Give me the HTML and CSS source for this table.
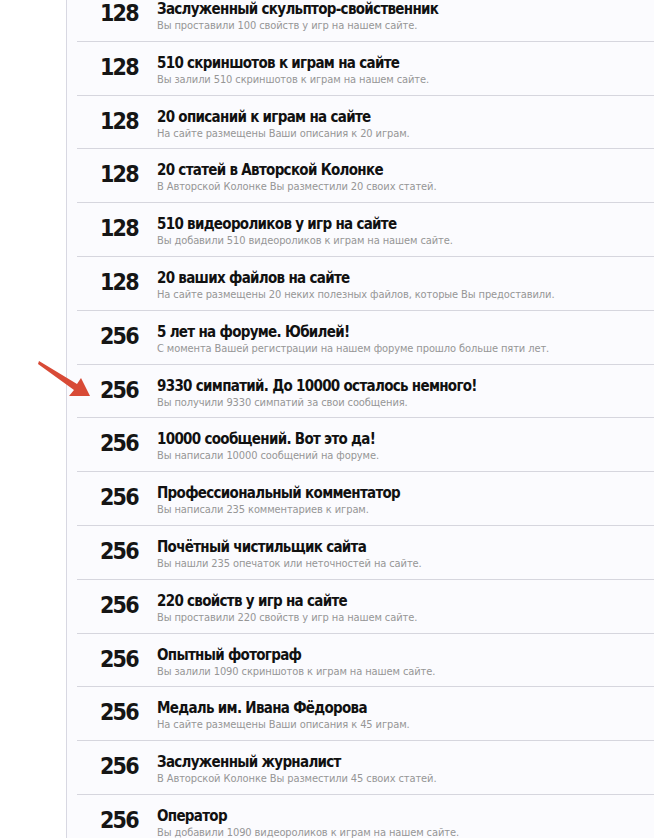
FILE: index.html
```html
<!DOCTYPE html>
<html lang="ru">
<head>
<meta charset="utf-8">
<title>Награды</title>
<link rel="stylesheet" href="styles.css">
</head>
<body>
<div class="page">
  <div class="gutter"></div>
  <div class="content">
    <ul class="list">
      <li class="row"><span class="pts">128</span><div class="info"><div class="title">Заслуженный скульптор-свойственник</div><div class="desc">Вы проставили 100 свойств у игр на нашем сайте.</div></div></li>
      <li class="row"><span class="pts">128</span><div class="info"><div class="title">510 скриншотов к играм на сайте</div><div class="desc">Вы залили 510 скриншотов к играм на нашем сайте.</div></div></li>
      <li class="row"><span class="pts">128</span><div class="info"><div class="title">20 описаний к играм на сайте</div><div class="desc">На сайте размещены Ваши описания к 20 играм.</div></div></li>
      <li class="row"><span class="pts">128</span><div class="info"><div class="title">20 статей в Авторской Колонке</div><div class="desc">В Авторской Колонке Вы разместили 20 своих статей.</div></div></li>
      <li class="row"><span class="pts">128</span><div class="info"><div class="title">510 видеороликов у игр на сайте</div><div class="desc">Вы добавили 510 видеороликов к играм на нашем сайте.</div></div></li>
      <li class="row"><span class="pts">128</span><div class="info"><div class="title">20 ваших файлов на сайте</div><div class="desc">На сайте размещены 20 неких полезных файлов, которые Вы предоставили.</div></div></li>
      <li class="row"><span class="pts">256</span><div class="info"><div class="title">5 лет на форуме. Юбилей!</div><div class="desc">С момента Вашей регистрации на нашем форуме прошло больше пяти лет.</div></div></li>
      <li class="row marked"><span class="pts">256</span><div class="info"><div class="title">9330 симпатий. До 10000 осталось немного!</div><div class="desc">Вы получили 9330 симпатий за свои сообщения.</div></div>
        <svg class="arrow" width="60" height="45" viewBox="0 0 60 45"><path d="M0 0 L38 23 L42 17 L51 35 L30 35 L35 29 L-1 3 Z" fill="#d84a36"/></svg>
      </li>
      <li class="row"><span class="pts">256</span><div class="info"><div class="title">10000 сообщений. Вот это да!</div><div class="desc">Вы написали 10000 сообщений на форуме.</div></div></li>
      <li class="row"><span class="pts">256</span><div class="info"><div class="title">Профессиональный комментатор</div><div class="desc">Вы написали 235 комментариев к играм.</div></div></li>
      <li class="row"><span class="pts">256</span><div class="info"><div class="title">Почётный чистильщик сайта</div><div class="desc">Вы нашли 235 опечаток или неточностей на сайте.</div></div></li>
      <li class="row"><span class="pts">256</span><div class="info"><div class="title">220 свойств у игр на сайте</div><div class="desc">Вы проставили 220 свойств у игр на нашем сайте.</div></div></li>
      <li class="row"><span class="pts">256</span><div class="info"><div class="title">Опытный фотограф</div><div class="desc">Вы залили 1090 скриншотов к играм на нашем сайте.</div></div></li>
      <li class="row"><span class="pts">256</span><div class="info"><div class="title">Медаль им. Ивана Фёдорова</div><div class="desc">На сайте размещены Ваши описания к 45 играм.</div></div></li>
      <li class="row"><span class="pts">256</span><div class="info"><div class="title">Заслуженный журналист</div><div class="desc">В Авторской Колонке Вы разместили 45 своих статей.</div></div></li>
      <li class="row"><span class="pts">256</span><div class="info"><div class="title">Оператор</div><div class="desc">Вы добавили 1090 видеороликов к играм на нашем сайте.</div></div></li>
    </ul>
  </div>
</div>
</body>
</html>
```
FILE: styles.css
```css
html, body {
  margin: 0;
  padding: 0;
  background: #ffffff;
  overflow: hidden;
}
body {
  font-family: "DejaVu Sans Condensed", "DejaVu Sans", sans-serif;
  color: #111;
}
.page {
  display: flex;
  margin-top: -12px;
  min-height: 900px;
}
.gutter {
  width: 66px;
  flex: none;
}
.content {
  flex: 1;
  background: #fbfbfe;
  border-left: 1px solid #d8d8e2;
}
.list {
  list-style: none;
  margin: 0 0 0 10px;
  padding: 0;
}
.row {
  position: relative;
  display: flex;
  align-items: flex-start;
  height: 52.8px;
  box-sizing: content-box;
  border-bottom: 1px solid #d6d6de;
}
.pts {
  width: 57px;
  padding-left: 23px;
  flex: none;
  font-weight: bold;
  font-size: 23px;
  line-height: 28px;
  letter-spacing: -1.8px;
  margin-top: 11px;
  color: #151515;
}
.info {
  padding-top: 12px;
}
.title {
  font-weight: bold;
  font-size: 15px;
  line-height: 18px;
  letter-spacing: -0.7px;
  color: #111;
}
.desc {
  margin-top: 1px;
  font-size: 11px;
  line-height: 14px;
  letter-spacing: -0.1px;
  color: #969696;
}
.arrow {
  position: absolute;
  left: -38px;
  top: -4px;
  overflow: visible;
}
```
